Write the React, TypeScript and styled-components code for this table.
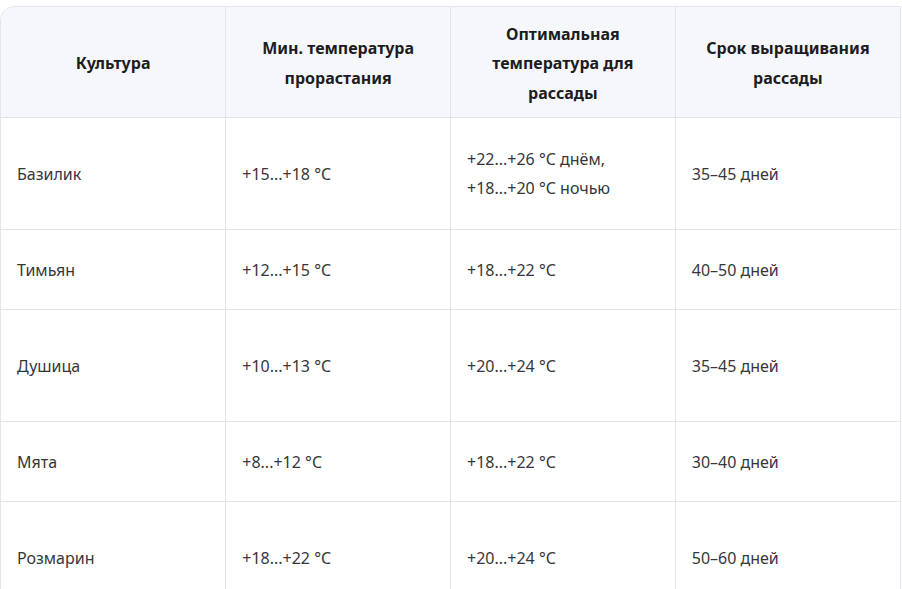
import React from "react";
import styled, { createGlobalStyle } from "styled-components";

const GlobalStyle = createGlobalStyle`
  html, body {
    margin: 0;
    padding: 0;
    background: #ffffff;
    font-family: "Noto Sans", "Open Sans", sans-serif;
  }
`;

interface IRow {
  name: string;
  minTemp: string;
  optimal: string[];
  term: string;
  tall: boolean;
}

const rows: IRow[] = [
  { name: "Базилик", minTemp: "+15...+18 °C", optimal: ["+22...+26 °C днём,", "+18...+20 °C ночью"], term: "35–45 дней", tall: true },
  { name: "Тимьян", minTemp: "+12...+15 °C", optimal: ["+18...+22 °C"], term: "40–50 дней", tall: false },
  { name: "Душица", minTemp: "+10...+13 °C", optimal: ["+20...+24 °C"], term: "35–45 дней", tall: true },
  { name: "Мята", minTemp: "+8...+12 °C", optimal: ["+18...+22 °C"], term: "30–40 дней", tall: false },
  { name: "Розмарин", minTemp: "+18...+22 °C", optimal: ["+20...+24 °C"], term: "50–60 дней", tall: true },
];

const headers: string[][] = [
  ["Культура"],
  ["Мин. температура", "прорастания"],
  ["Оптимальная", "температура для", "рассады"],
  ["Срок выращивания", "рассады"],
];

const Lines: React.FC<{ lines: string[] }> = ({ lines }) => (
  <>
    {lines.map((line, j) => (
      <React.Fragment key={j}>
        {j > 0 && <br />}
        {line}
      </React.Fragment>
    ))}
  </>
);

const App: React.FC = () => {
  return (
    <>
      <GlobalStyle />
      <Page>
        <Frame>
          <Table>
            <thead>
              <HeadRow>
                {headers.map((lines, i) => (
                  <HeadCell key={i}>
                    <Lines lines={lines} />
                  </HeadCell>
                ))}
              </HeadRow>
            </thead>
            <tbody>
              {rows.map((row) => (
                <BodyRow key={row.name} $tall={row.tall}>
                  <Cell>{row.name}</Cell>
                  <Cell>{row.minTemp}</Cell>
                  <Cell>
                    <Lines lines={row.optimal} />
                  </Cell>
                  <Cell>{row.term}</Cell>
                </BodyRow>
              ))}
            </tbody>
          </Table>
        </Frame>
      </Page>
    </>
  );
};

const Page = styled.div`
  padding-top: 6px;
  height: 583px;
  overflow: hidden;
`;

const Frame = styled.div`
  width: 901px;
  box-sizing: border-box;
  border: 1px solid #e3e5ee;
  border-top-left-radius: 14px;
  overflow: hidden;
`;

const Table = styled.table`
  width: 100%;
  border-collapse: collapse;
  table-layout: fixed;
`;

const HeadRow = styled.tr`
  height: 110px;
  background: #f6f7fb;
`;

const HeadCell = styled.th`
  padding: 4px 16px 0;
  font-size: 16px;
  font-weight: 700;
  line-height: 29.5px;
  color: #1c1c21;
  text-align: center;
  vertical-align: middle;
  border-left: 1px solid #e3e5ee;
  border-bottom: 1px solid #e3e5ee;

  &:first-child {
    border-left: none;
  }
`;

const BodyRow = styled.tr<{ $tall: boolean }>`
  height: ${(p) => (p.$tall ? "112px" : "80px")};
`;

const Cell = styled.td`
  padding: 2px 16px 0;
  font-size: 16px;
  line-height: 29px;
  color: #36363b;
  text-align: left;
  vertical-align: middle;
  border-left: 1px solid #e3e5ee;
  border-bottom: 1px solid #e3e5ee;

  &:first-child {
    border-left: none;
  }
`;

export default App;
